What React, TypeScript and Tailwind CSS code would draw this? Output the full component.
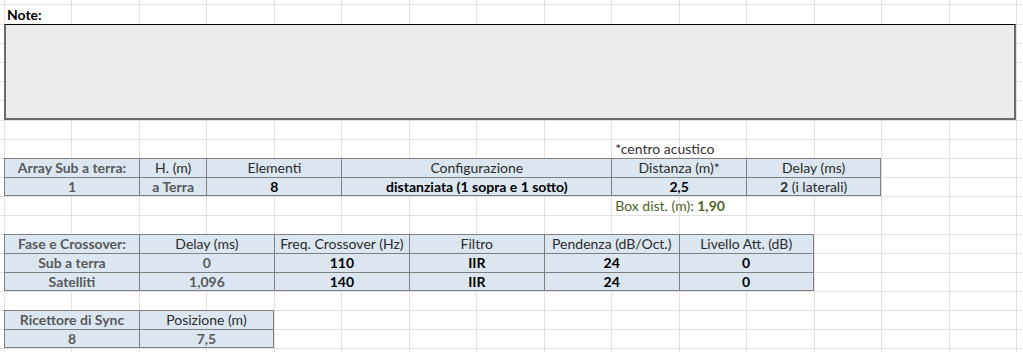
import React from 'react'

// Sheet geometry: a 4px gutter, 15 spreadsheet columns, then whatever is left
const COLS = 'grid-cols-[4px_repeat(15,67.47px)_1fr]'
const ROWS = 'grid-rows-[4px_20px_19px_19px_19px_19px_20px_repeat(12,19px)_1fr]'
const NCOLS = 17
const NROWS = 20

type Tone = 'label' | 'head' | 'value' | 'muted'

type Cell = {
  col: string
  text: React.ReactNode
  tone: Tone
}

const toneClass: Record<Tone, string> = {
  label: 'font-bold text-[#595959]',
  head: 'text-[#2b2b2b]',
  value: 'font-bold text-black',
  muted: 'font-bold text-[#595959]',
}

const subArray: { row: string; cells: Cell[] }[] = [
  {
    row: 'row-start-10',
    cells: [
      { col: 'col-start-2 col-span-2', text: 'Array Sub a terra:', tone: 'label' },
      { col: 'col-start-4 col-span-1', text: 'H. (m)', tone: 'head' },
      { col: 'col-start-5 col-span-2', text: 'Elementi', tone: 'head' },
      { col: 'col-start-7 col-span-4', text: 'Configurazione', tone: 'head' },
      { col: 'col-start-11 col-span-2', text: 'Distanza (m)*', tone: 'head' },
      { col: 'col-start-13 col-span-2', text: 'Delay (ms)', tone: 'head' },
    ],
  },
  {
    row: 'row-start-11',
    cells: [
      { col: 'col-start-2 col-span-2', text: '1', tone: 'muted' },
      { col: 'col-start-4 col-span-1', text: 'a Terra', tone: 'muted' },
      { col: 'col-start-5 col-span-2', text: '8', tone: 'value' },
      { col: 'col-start-7 col-span-4', text: 'distanziata (1 sopra e 1 sotto)', tone: 'value' },
      { col: 'col-start-11 col-span-2', text: '2,5', tone: 'value' },
      {
        col: 'col-start-13 col-span-2',
        text: (
          <span>
            <span className="font-bold">2</span> (i laterali)
          </span>
        ),
        tone: 'head',
      },
    ],
  },
]

const crossover: { row: string; cells: Cell[] }[] = [
  {
    row: 'row-start-14',
    cells: [
      { col: 'col-start-2 col-span-2', text: 'Fase e Crossover:', tone: 'label' },
      { col: 'col-start-4 col-span-2', text: 'Delay (ms)', tone: 'head' },
      { col: 'col-start-6 col-span-2', text: 'Freq. Crossover (Hz)', tone: 'head' },
      { col: 'col-start-8 col-span-2', text: 'Filtro', tone: 'head' },
      { col: 'col-start-10 col-span-2', text: 'Pendenza (dB/Oct.)', tone: 'head' },
      { col: 'col-start-12 col-span-2', text: 'Livello Att. (dB)', tone: 'head' },
    ],
  },
  {
    row: 'row-start-15',
    cells: [
      { col: 'col-start-2 col-span-2', text: 'Sub a terra', tone: 'label' },
      { col: 'col-start-4 col-span-2', text: '0', tone: 'muted' },
      { col: 'col-start-6 col-span-2', text: '110', tone: 'value' },
      { col: 'col-start-8 col-span-2', text: 'IIR', tone: 'value' },
      { col: 'col-start-10 col-span-2', text: '24', tone: 'value' },
      { col: 'col-start-12 col-span-2', text: '0', tone: 'value' },
    ],
  },
  {
    row: 'row-start-16',
    cells: [
      { col: 'col-start-2 col-span-2', text: 'Satelliti', tone: 'label' },
      { col: 'col-start-4 col-span-2', text: '1,096', tone: 'muted' },
      { col: 'col-start-6 col-span-2', text: '140', tone: 'value' },
      { col: 'col-start-8 col-span-2', text: 'IIR', tone: 'value' },
      { col: 'col-start-10 col-span-2', text: '24', tone: 'value' },
      { col: 'col-start-12 col-span-2', text: '0', tone: 'value' },
    ],
  },
]

const sync: { row: string; cells: Cell[] }[] = [
  {
    row: 'row-start-18',
    cells: [
      { col: 'col-start-2 col-span-2', text: 'Ricettore di Sync', tone: 'label' },
      { col: 'col-start-4 col-span-2', text: 'Posizione (m)', tone: 'head' },
    ],
  },
  {
    row: 'row-start-19',
    cells: [
      { col: 'col-start-2 col-span-2', text: '8', tone: 'muted' },
      { col: 'col-start-4 col-span-2', text: '7,5', tone: 'muted' },
    ],
  },
]

function Table({ rows }: { rows: { row: string; cells: Cell[] }[] }) {
  return (
    <>
      {rows.map((r, ri) =>
        r.cells.map((c, ci) => (
          <div
            key={`${ri}-${ci}`}
            className={[
              r.row,
              c.col,
              'flex items-center justify-center bg-[#dce6f1] border-l border-t border-[#7f7f7f] whitespace-pre',
              ci === r.cells.length - 1 ? 'border-r' : '',
              ri === rows.length - 1 ? 'border-b' : '',
              toneClass[c.tone],
            ].join(' ')}
          >
            {c.text}
          </div>
        ))
      )}
    </>
  )
}

// Light spreadsheet gridlines behind everything
function Gridlines() {
  const cells = []
  for (let r = 0; r < NROWS; r++) {
    for (let c = 0; c < NCOLS; c++) {
      cells.push(
        <div
          key={`${r}-${c}`}
          className={[
            'border-[#e1e1e1]',
            r > 0 ? 'border-t' : '',
            c > 0 ? 'border-l' : '',
          ].join(' ')}
        />
      )
    }
  }
  return <div className={`[grid-area:1/1] grid ${COLS} ${ROWS}`}>{cells}</div>
}

export default function App() {
  return (
    <div
      className="grid h-[352px] w-full overflow-hidden bg-white text-[14px] leading-none"
      style={{ fontFamily: 'Lato, "Liberation Sans", sans-serif' }}
    >
      <Gridlines />

      <div className={`[grid-area:1/1] grid ${COLS} ${ROWS}`}>
        <div className="col-start-2 col-span-3 row-start-2 flex items-center pl-[3px] pt-[2px] font-bold text-black">
          Note:
        </div>

        {/* notes box */}
        <div className="col-start-2 col-span-15 row-start-3 row-span-5 bg-[#ebebeb] border-t border-t-black border-l-2 border-r-2 border-b-2 border-l-[#6b6b6b] border-r-[#6b6b6b] border-b-[#6b6b6b]" />

        <div className="col-start-11 col-span-3 row-start-9 flex items-center pl-[4px] text-[#333333] whitespace-nowrap">
          *centro acustico
        </div>

        <Table rows={subArray} />

        <div className="col-start-11 col-span-3 row-start-12 flex items-center pl-[4px] text-[#4f6228] whitespace-nowrap">
          <span>
            Box dist. (m): <span className="font-bold">1,90</span>
          </span>
        </div>

        <Table rows={crossover} />
        <Table rows={sync} />
      </div>
    </div>
  )
}
